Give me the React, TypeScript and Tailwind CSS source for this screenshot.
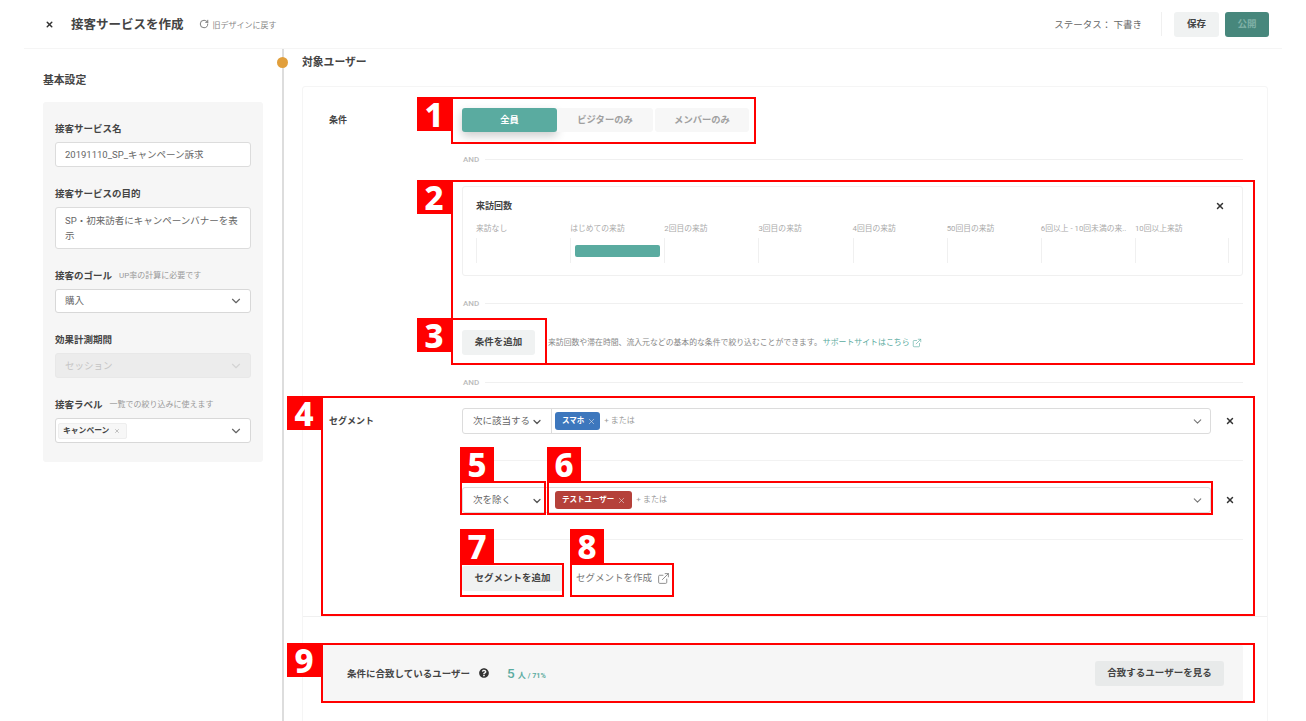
import React from "react";
import { ChevronDown, ExternalLink, RotateCw, X } from "lucide-react";
import { FaQuestionCircle } from "react-icons/fa";

const visitColumns = [
  "来訪なし",
  "はじめての来訪",
  "2回目の来訪",
  "3回目の来訪",
  "4回目の来訪",
  "50回目の来訪",
  "6回以上 - 10回未満の来..",
  "10回以上来訪",
];

const Field = ({
  label,
  note,
  children,
}: {
  label: string;
  note?: string;
  children: React.ReactNode;
}) => (
  <div className="flex flex-col gap-[7px]">
    <div className="flex h-[14px] items-center gap-[7px] pt-[2px]">
      <span className="text-[9.5px] font-bold text-[#444]">{label}</span>
      {note && <span className="text-[8px] text-[#999]">{note}</span>}
    </div>
    {children}
  </div>
);

const SideSelect = ({
  children,
  disabled,
  short,
}: {
  children: React.ReactNode;
  disabled?: boolean;
  short?: boolean;
}) => (
  <div
    className={`flex items-center justify-between rounded-[3px] border pl-[9px] pr-[7px] text-[9.5px] ${
      short ? "h-[24px]" : "h-[25px]"
    } ${disabled ? "border-[#e8e8e8] bg-[#ececec] text-[#c4c4c4]" : "border-[#d8d8d8] bg-white text-[#666]"}`}
  >
    <span className="pt-px">{children}</span>
    <ChevronDown size={14} className={disabled ? "text-[#d4d4d4]" : "text-[#666]"} />
  </div>
);

const AndLine = () => (
  <div className="flex h-[14px] items-center gap-[6px] pl-px">
    <span className="pt-[2px] text-[8px] font-medium text-[#bbb]">AND</span>
    <div className="h-px flex-1 bg-[#f0f0f0]" />
  </div>
);

const SegmentRow = ({
  mode,
  modeClass,
  inputClass,
  tag,
  tagClass,
}: {
  mode: string;
  modeClass: string;
  inputClass: string;
  tag: string;
  tagClass: string;
}) => (
  <div className="flex items-center">
    <div className="flex h-[26px] w-[749px] rounded-[3px] border border-[#dcdcdc] bg-white">
      <div
        className={`flex items-center justify-between border-r border-[#dcdcdc] pl-[10px] pt-px text-[9.5px] text-[#666] ${modeClass}`}
      >
        {mode}
        <ChevronDown size={12} strokeWidth={2.5} className="text-[#555]" />
      </div>
      <div className={`flex flex-1 items-center pr-[6px] ${inputClass}`}>
        <span
          className={`flex h-[18px] items-center gap-[3px] rounded-[3px] pl-[7px] text-[7.5px] font-bold text-white ${tagClass}`}
        >
          {tag}
          <X size={9} strokeWidth={1.5} className="text-[#e8e8e8]" />
        </span>
        <span className="ml-[4px] flex-1 text-[8px] text-[#999]">+ または</span>
        <ChevronDown size={13} className="text-[#777]" />
      </div>
    </div>
    <X size={10} strokeWidth={3.5} className="ml-[14px] text-[#333]" />
  </div>
);

// annotation boxes sit on top of the page, so these are absolute on purpose
const boxes = [
  "left-[451px] top-[97px] h-[47px] w-[305px]",
  "left-[451px] top-[180px] h-[185px] w-[804px]",
  "left-[451px] top-[318px] h-[47px] w-[96px]",
  "left-[321px] top-[396px] h-[220px] w-[934px]",
  "left-[460px] top-[481px] h-[34px] w-[86px]",
  "left-[547px] top-[481px] h-[34px] w-[666px]",
  "left-[460px] top-[563px] h-[34px] w-[104px]",
  "left-[570px] top-[563px] h-[34px] w-[104px]",
  "left-[321px] top-[643px] h-[60px] w-[934px]",
];

const badges = [
  { n: "1", pos: "left-[417px] top-[97px]" },
  { n: "2", pos: "left-[417px] top-[180px]" },
  { n: "3", pos: "left-[417px] top-[318px]" },
  { n: "4", pos: "left-[287px] top-[396px]" },
  { n: "5", pos: "left-[460px] top-[447px]" },
  { n: "6", pos: "left-[547px] top-[447px]" },
  { n: "7", pos: "left-[460px] top-[529px]" },
  { n: "8", pos: "left-[570px] top-[529px]" },
  { n: "9", pos: "left-[287px] top-[643px]" },
];

const App = () => {
  return (
    <div className="relative h-[721px] w-[1306px] overflow-hidden bg-white font-['Roboto','Noto_Sans_CJK_JP',sans-serif] text-[#333]">
      <header className="mx-6 flex h-[49px] items-center border-b border-[#f5f5f5] pl-[21px] pr-[13px]">
        <X size={9} strokeWidth={4} className="text-[#333]" />
        <h1 className="ml-[17px] pt-[2px] text-[12.5px] font-bold text-[#444]">接客サービスを作成</h1>
        <RotateCw size={10} strokeWidth={2} className="ml-[15px] text-[#666]" />
        <span className="ml-[4px] pt-[3px] text-[8px] text-[#888]">旧デザインに戻す</span>
        <span className="ml-auto pt-[2px] text-[9.5px] text-[#666]">ステータス： 下書き</span>
        <div className="ml-[19px] h-6 w-px bg-[#f0f0f0]" />
        <button className="ml-[12px] h-[25px] w-[45px] rounded-[3px] bg-[#f0f2f2] text-[9.5px] font-bold text-[#444]">
          保存
        </button>
        <button className="ml-[6px] h-[25px] w-[44px] rounded-[3px] bg-[#47877c] text-[9.5px] font-bold text-[#7fb0a6]">
          公開
        </button>
      </header>

      <div className="mx-6 flex h-[672px]">
        <aside className="w-[258px] shrink-0 pl-[19px] pr-[19px]">
          <h2 className="flex h-[53px] items-center pt-[11px] text-[10.8px] font-bold text-[#444]">基本設定</h2>
          <div className="flex flex-col gap-[19px] rounded-[3px] bg-[#f6f6f6] px-3 py-[19px]">
            <Field label="接客サービス名">
              <div className="flex h-[25px] items-center rounded-[3px] border border-[#dcdcdc] bg-white pl-[9px] pt-px text-[9.5px] text-[#666]">
                20191110_SP_キャンペーン訴求
              </div>
            </Field>
            <Field label="接客サービスの目的">
              <div className="h-[42px] whitespace-nowrap rounded-[3px] border border-[#dcdcdc] bg-white pl-[9px] pt-[6px] text-[9.5px] leading-[14.5px] text-[#666]">
                SP・初来訪者にキャンペーンバナーを表
                <br />示
              </div>
            </Field>
            <Field label="接客のゴール" note="UP率の計算に必要です">
              <SideSelect short>購入</SideSelect>
            </Field>
            <Field label="効果計測期間">
              <SideSelect disabled>セッション</SideSelect>
            </Field>
            <Field label="接客ラベル" note="一覧での絞り込みに使えます">
              <div className="flex h-[25px] items-center justify-between rounded-[3px] border border-[#d8d8d8] bg-white pl-[2px] pr-[7px]">
                <span className="flex h-4 items-center gap-[5px] rounded-[2px] border border-[#eee] bg-[#f7f7f7] pl-[4px] pr-[6px] text-[7.8px] font-bold text-[#444]">
                  キャンペーン
                  <X size={6} strokeWidth={2} className="text-[#888]" />
                </span>
                <ChevronDown size={14} className="text-[#666]" />
              </div>
            </Field>
          </div>
        </aside>

        <main className="relative flex-1 border-l-2 border-[#dddddd] pl-[18px] pr-[14px]">
          <span className="absolute left-[-7px] top-[7.5px] size-[11px] rounded-full bg-[#e19f3c]" />
          <h2 className="flex h-[26px] items-center pt-[3px] text-[10.8px] font-bold text-[#444]">対象ユーザー</h2>

          <section className="mt-[11px] h-[700px] rounded-t-[3px] border border-[#f5f5f5]">
            <div className="flex pl-[26px] pr-[24px] pt-[21px]">
              <div className="w-[133px] shrink-0 pt-[6px] text-[9px] font-bold text-[#444]">条件</div>
              <div className="flex-1">
                <div className="flex h-6 text-[9.3px] font-bold text-[#a0a0a0]">
                  <div className="flex w-[95px] items-center justify-center rounded-[3px] bg-[#5aaba0] text-white shadow-[0_4px_10px_rgba(0,0,0,0.2)]">
                    全員
                  </div>
                  <div className="flex w-[96px] items-center justify-center rounded-r-[3px] bg-[#f7f7f7]">
                    ビジターのみ
                  </div>
                  <div className="ml-[2px] flex w-[94px] items-center justify-center rounded-[3px] bg-[#f7f7f7]">
                    メンバーのみ
                  </div>
                </div>

                <div className="mt-5">
                  <AndLine />
                </div>

                <div className="mt-5 h-[90px] rounded-[3px] border border-[#f0f0f0] pl-[13px] pr-[13px] pt-[13px]">
                  <div className="flex h-[13px] items-center justify-between">
                    <span className="text-[9px] font-bold text-[#444]">来訪回数</span>
                    <X size={10} strokeWidth={3.5} className="-mt-[2px] mr-[4px] text-[#333]" />
                  </div>
                  <div className="mt-[10px] grid grid-cols-8">
                    {visitColumns.map((c, i) => (
                      <div key={c} className="min-w-0">
                        <div className="whitespace-nowrap text-[7.8px] leading-[12px] text-[#aaa]">{c}</div>
                        <div
                          className={
                            i === 7
                              ? "mt-[3px] flex h-[25px] items-center border-x border-[#f0f0f0] px-[4px]"
                              : "mt-[3px] flex h-[25px] items-center border-l border-[#f0f0f0] px-[4px]"
                          }
                        >
                          {i === 1 && <div className="h-3 w-full rounded-[2px] bg-[#5aaba0]" />}
                        </div>
                      </div>
                    ))}
                  </div>
                </div>

                <div className="mt-5">
                  <AndLine />
                </div>

                <div className="mt-5 flex items-center">
                  <button className="h-[25px] w-[73px] rounded-[3px] bg-[#f0f2f2] text-[9.5px] font-bold text-[#444]">
                    条件を追加
                  </button>
                  <span className="ml-[13px] text-[7.85px] text-[#888]">
                    来訪回数や滞在時間、流入元などの基本的な条件で絞り込むことができます。
                  </span>
                  <span className="ml-[1px] text-[7.9px] text-[#5aaba0]">サポートサイトはこちら</span>
                  <ExternalLink size={10} strokeWidth={1.5} className="ml-[2px] text-[#5aaba0]" />
                </div>

                <div className="mt-5">
                  <AndLine />
                </div>
              </div>
            </div>

            <div className="mt-[19px] flex border-b border-[#f0f0f0] pb-[25px] pl-[26px] pr-[24px]">
              <div className="w-[133px] shrink-0 pt-[7px] text-[9px] font-bold text-[#444]">セグメント</div>
              <div className="flex-1">
                <SegmentRow
                  mode="次に該当する"
                  modeClass="w-[89px] pr-[8px]"
                  inputClass="pl-[3px]"
                  tag="スマホ"
                  tagClass="bg-[#3d77bd] pr-[4px]"
                />
                <div className="my-[26px] h-px bg-[#f2f2f2]" />
                <SegmentRow
                  mode="次を除く"
                  modeClass="w-[86px] pr-[5px]"
                  inputClass="pl-[6px]"
                  tag="テストユーザー"
                  tagClass="bg-[#b5413a] pr-[6px]"
                />
                <div className="my-[26px] h-px bg-[#f2f2f2]" />
                <div className="flex items-center">
                  <button className="h-[25px] w-[101px] rounded-[3px] bg-[#f0f2f2] text-[9.5px] font-bold text-[#444]">
                    セグメントを追加
                  </button>
                  <span className="ml-[13px] text-[9.5px] text-[#777]">セグメントを作成</span>
                  <ExternalLink size={13} strokeWidth={1.5} className="ml-[5px] text-[#777]" />
                </div>
              </div>
            </div>

            <div className="ml-[19px] mr-[24px] mt-[28px] flex h-[56px] items-center rounded-[2px] bg-[#f6f6f6] pl-[25px] pr-[19px]">
              <span className="pt-[2px] text-[9.5px] font-bold text-[#444]">条件に合致しているユーザー</span>
              <FaQuestionCircle size={10} className="ml-[9px] text-[#333]" />
              <span className="ml-[18px] flex items-baseline text-[#5aaba0]">
                <span className="text-[13.5px] font-medium">5</span>
                <span className="ml-[3px] text-[8px] font-bold">人</span>
                <span className="ml-[2px] text-[7.2px] font-bold">/ 71%</span>
              </span>
              <button className="ml-auto h-[25px] w-[129px] rounded-[3px] bg-[#e8eaea] text-[9.5px] font-bold text-[#444]">
                合致するユーザーを見る
              </button>
            </div>
          </section>
        </main>
      </div>

      {boxes.map((b) => (
        <div key={b} className={`pointer-events-none absolute border-2 border-[#ff0000] ${b}`} />
      ))}
      {badges.map((b) => (
        <div
          key={b.n}
          className={`absolute flex h-[34px] w-[34px] items-center justify-center bg-[#ff0000] font-['Noto_Sans',sans-serif] text-[33px] font-extrabold leading-none text-white ${b.pos}`}
        >
          {b.n}
        </div>
      ))}
    </div>
  );
};

export default App;
